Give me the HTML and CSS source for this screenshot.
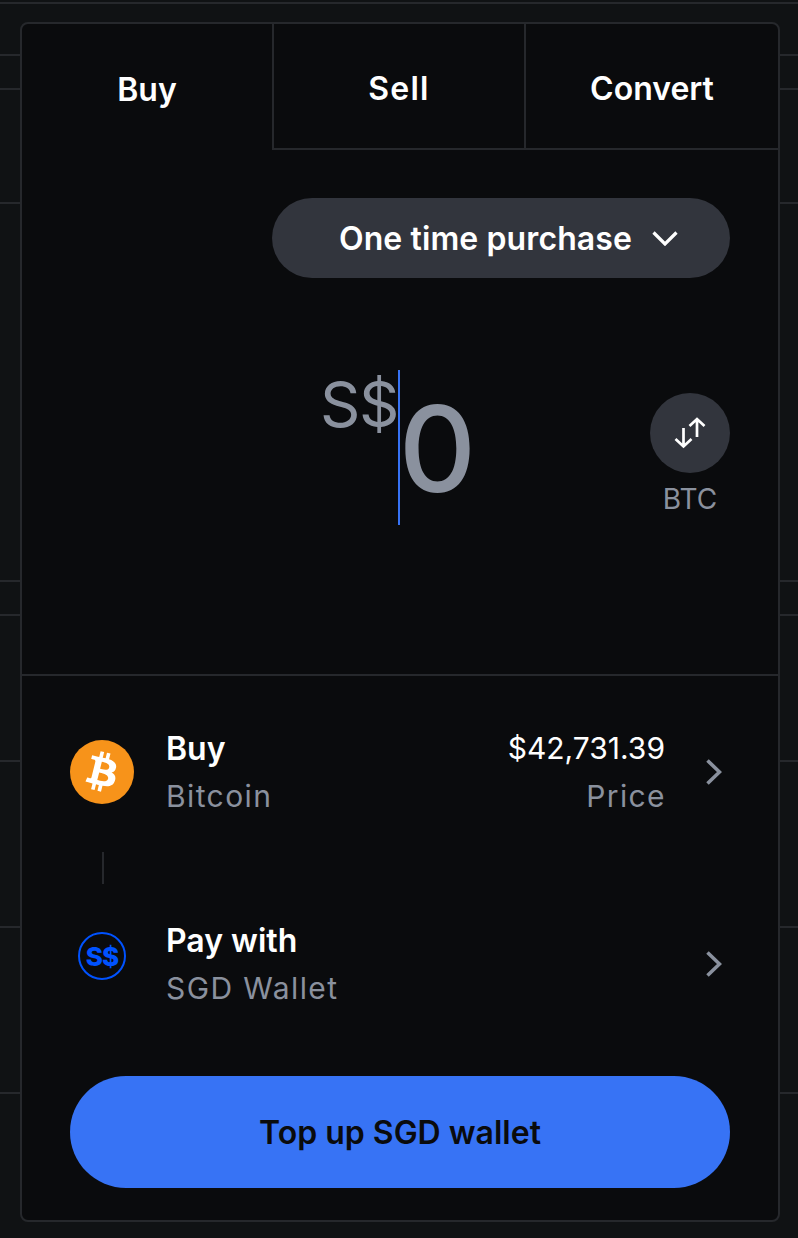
FILE: index.html
```html
<!DOCTYPE html>
<html lang="en">
<head>
<meta charset="utf-8">
<title>Buy Bitcoin</title>
<link rel="stylesheet" href="styles.css">
</head>
<body>
<div class="page">
  <div class="backdrop">
    <div class="line-row h-a"></div>
    <div class="line-row h-b"></div>
    <div class="line-row h-c"></div>
    <div class="line-row h-d"></div>
    <div class="line-row h-e"></div>
    <div class="line-row h-f"></div>
    <div class="line-row h-g"></div>
    <div class="line-row h-h"></div>
    <div class="line-row h-i"></div>
  </div>
  <main class="card">
    <nav class="tabs">
      <div class="tab tab-buy">Buy</div>
      <div class="tab tab-sell">Sell</div>
      <div class="tab tab-convert">Convert</div>
    </nav>
    <section class="entry">
      <div class="pill-row">
        <div class="pill">
          <span>One time purchase</span>
          <svg class="pill-chevron" viewBox="0 0 26 15" width="26" height="15" aria-hidden="true"><path d="M1.5 1.5 13 13 24.500 1.500" fill="none" stroke="#fff" stroke-width="3.200"/></svg>
        </div>
      </div>
      <div class="amount-row">
        <span class="currency">S$</span>
        <span class="caret"></span>
        <span class="amount">0</span>
        <div class="switch">
          <div class="switch-btn">
            <svg viewBox="0 0 32 32" width="32" height="32" aria-hidden="true"><path d="M23 20V2M15.500 9 23 2l7.500 7M9.500 11v18M1.500 22l8 7.500 8-7.500" fill="none" stroke="#fff" stroke-width="2.700"/></svg>
          </div>
          <span class="switch-label">BTC</span>
        </div>
      </div>
    </section>
    <section class="summary">
      <div class="row">
        <div class="row-icon">
          <svg viewBox="0 0 24 24" width="64" height="64" aria-hidden="true">
            <circle cx="12" cy="12" r="12" fill="#f7931a"/>
            <path fill="#fff" fill-rule="evenodd" d="M17.288 10.291c.24-1.59-.974-2.45-2.64-3.03l.54-2.153-1.315-.33-.525 2.107c-.345-.087-.705-.167-1.064-.25l.526-2.127-1.32-.33-.54 2.165c-.285-.067-.565-.132-.84-.2l-1.815-.45-.35 1.407s.975.225.955.236c.535.136.63.486.615.766l-1.477 5.92c-.075.166-.24.406-.614.314.015.02-.96-.24-.96-.24l-.66 1.51 1.71.426.93.242-.54 2.19 1.32.327.54-2.17c.36.1.705.19 1.05.273l-.51 2.154 1.32.33.545-2.19c2.24.427 3.93.257 4.64-1.774.57-1.637-.03-2.58-1.217-3.196.854-.193 1.5-.76 1.68-1.93h.01zm-3.01 4.22c-.404 1.64-3.157.75-4.05.53l.72-2.9c.896.23 3.757.67 3.33 2.37zm.41-4.24c-.37 1.49-2.662.735-3.405.55l.654-2.64c.744.18 3.137.524 2.75 2.084v.006z"/>
          </svg>
        </div>
        <div class="row-text">
          <div class="title">Buy</div>
          <div class="sub">Bitcoin</div>
        </div>
        <div class="row-value">
          <div class="price">$42,731.39</div>
          <div class="sub">Price</div>
        </div>
        <svg class="row-chevron" viewBox="0 0 16 26" width="16" height="26" aria-hidden="true"><path d="M1.500 1.500 13.500 13 1.500 24.500" fill="none" stroke="#8a919e" stroke-width="3.600"/></svg>
      </div>
      <div class="connector"></div>
      <div class="row">
        <div class="row-icon">
          <div class="sgd-badge">S$</div>
        </div>
        <div class="row-text">
          <div class="title">Pay with</div>
          <div class="sub">SGD Wallet</div>
        </div>
        <svg class="row-chevron" viewBox="0 0 16 26" width="16" height="26" aria-hidden="true"><path d="M1.500 1.500 13.500 13 1.500 24.500" fill="none" stroke="#8a919e" stroke-width="3.600"/></svg>
      </div>
      <div class="cta">Top up SGD wallet</div>
    </section>
  </main>
</div>
</body>
</html>
```

FILE: styles.css
```css
* { box-sizing: border-box; }

html, body {
  margin: 0;
  padding: 0;
  background: #101214;
}

body {
  font-family: Inter, "Liberation Sans", sans-serif;
  color: #fff;
  overflow: hidden;
}

.page {
  position: relative;
  width: 798px;
  height: 1238px;
  overflow: hidden;
}

.backdrop {
  display: flex;
  flex-direction: column;
}

.line-row { border-bottom: 2px solid #26282c; }
.h-a { height: 4px; }
.h-b { height: 52px; }
.h-c { height: 34px; }
.h-d { height: 114px; }
.h-e { height: 378px; }
.h-f { height: 34px; }
.h-g { height: 146px; }
.h-h { height: 166px; }
.h-i { height: 166px; }

.card {
  position: absolute;
  left: 20px;
  top: 22px;
  width: 760px;
  height: 1200px;
  background: #0a0b0d;
  border: 2px solid #26282c;
  border-radius: 8px;
  overflow: hidden;
}

.tabs {
  display: flex;
  height: 126px;
}

.tab {
  display: flex;
  align-items: center;
  justify-content: center;
  font-size: 32px;
  font-weight: 600;
  padding-top: 5px;
}

.tab-buy { width: 250px; }

.tab-sell {
  width: 252px;
  border-left: 2px solid #26282c;
  border-bottom: 2px solid #26282c;
  letter-spacing: 1.2px;
}

.tab-convert {
  flex: 1;
  border-left: 2px solid #26282c;
  border-bottom: 2px solid #26282c;
}

.entry {
  height: 526px;
  border-bottom: 2px solid #26282c;
  padding: 48px 48px 0;
}

.pill-row {
  display: flex;
  justify-content: flex-end;
}

.pill {
  display: flex;
  align-items: center;
  gap: 20px;
  width: 458px;
  height: 80px;
  padding-left: 67px;
  border-radius: 40px;
  background: #32353d;
  font-size: 32px;
  font-weight: 600;
  letter-spacing: 0.1px;
}

.amount-row {
  display: flex;
  align-items: flex-start;
  margin-top: 92px;
  padding-left: 250px;
}

.currency {
  font-size: 63px;
  line-height: 68px;
  letter-spacing: -1.5px;
  color: #8a919e;
}

.caret {
  width: 2px;
  height: 155px;
  background: #3773f5;
}

.amount {
  font-size: 120px;
  font-weight: 450;
  line-height: 155px;
  margin-top: 1px;
  margin-left: -1px;
  color: #8a919e;
}

.switch {
  display: flex;
  flex-direction: column;
  align-items: center;
  width: 80px;
  margin-left: auto;
  margin-top: 23px;
}

.switch-btn {
  display: flex;
  align-items: center;
  justify-content: center;
  width: 80px;
  height: 80px;
  border-radius: 50%;
  background: #32353d;
}

.switch-label {
  margin-top: 8px;
  font-size: 28px;
  line-height: 36px;
  color: #8a919e;
}

.summary {
  padding: 48px 48px 0;
}

.row {
  display: flex;
  align-items: center;
  height: 96px;
}

.row-icon {
  display: flex;
  justify-content: center;
  align-self: flex-start;
  flex: none;
  width: 64px;
  height: 64px;
  margin-top: 16px;
  margin-right: 32px;
}

.row-icon svg { display: block; }

.sgd-badge {
  display: flex;
  align-items: center;
  justify-content: center;
  width: 48px;
  height: 48px;
  border: 2px solid #0052ff;
  border-radius: 50%;
  color: #0052ff;
  font-size: 26px;
  font-weight: 800;
  letter-spacing: -0.8px;
}

.row-text { flex: 1; }

.title {
  font-size: 32px;
  font-weight: 600;
  line-height: 50px;
  margin-bottom: -2px;
}

.sub {
  font-size: 30px;
  line-height: 48px;
  letter-spacing: 1.4px;
  color: #8a919e;
}

.row-value { text-align: right; }

.row-value .sub { margin-right: -1px; }

.price {
  font-size: 30px;
  line-height: 48px;
}

.row-chevron {
  flex: none;
  margin-left: 41px;
  margin-right: 8px;
}

.connector {
  width: 2px;
  height: 32px;
  margin: 32px 0 32px 32px;
  background: #26282c;
}

.cta {
  display: flex;
  align-items: center;
  justify-content: center;
  height: 112px;
  margin-top: 64px;
  border-radius: 56px;
  background: #3773f5;
  color: #0a0b0d;
  font-size: 32px;
  font-weight: 600;
}
```
